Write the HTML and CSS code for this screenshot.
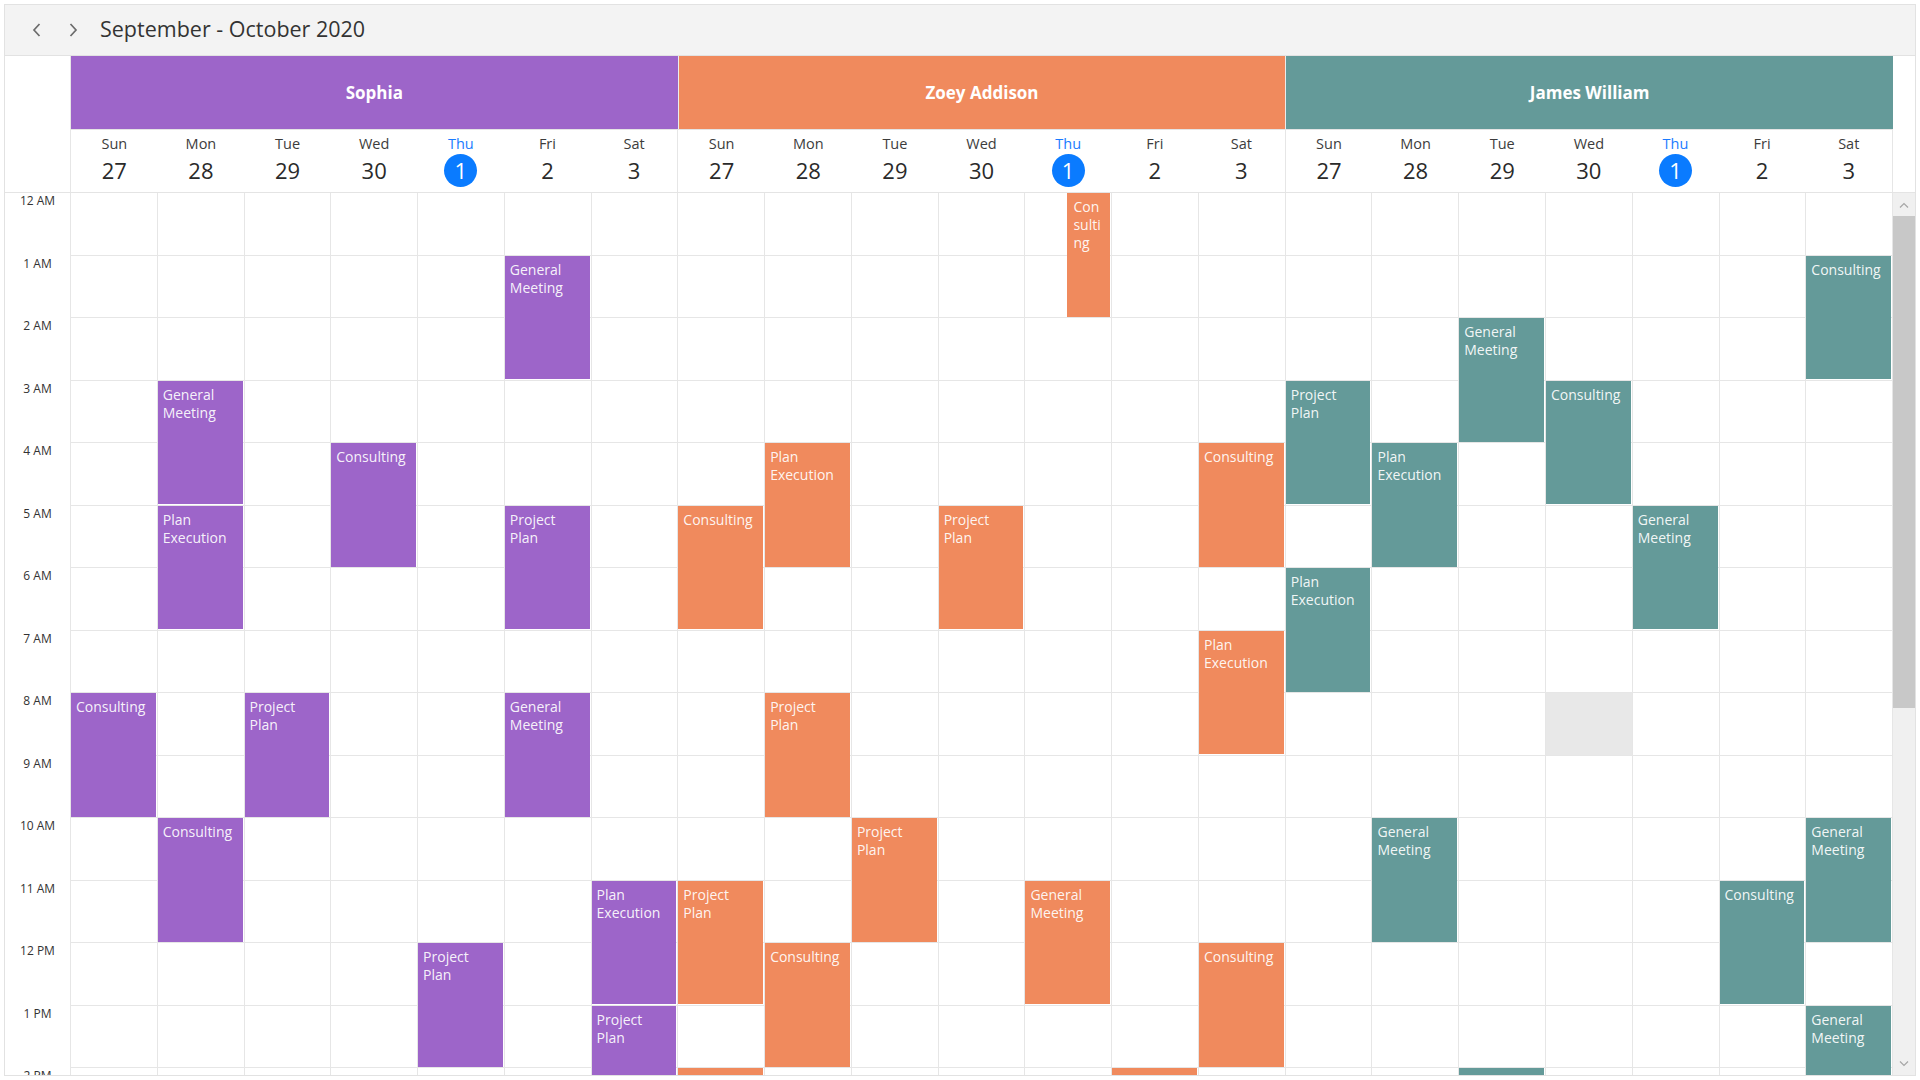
FILE: index.html
```html
<!DOCTYPE html>
<html lang="en">
<head>
<meta charset="utf-8">
<title>Scheduler</title>
<link rel="stylesheet" href="styles.css">
</head>
<body>
<div class="scheduler">
  <div class="toolbar">
    <button class="nav" aria-label="Previous">
      <svg width="12" height="16" viewBox="0 0 12 16"><path d="M8.5 2 L3 8 L8.5 14" fill="none" stroke="#6b6b6b" stroke-width="1.7"/></svg>
    </button>
    <button class="nav" aria-label="Next">
      <svg width="12" height="16" viewBox="0 0 12 16"><path d="M3.5 2 L9 8 L3.5 14" fill="none" stroke="#6b6b6b" stroke-width="1.7"/></svg>
    </button>
    <span class="title">September - October 2020</span>
  </div>

  <div class="head">
    <div class="corner"></div>
    <div class="hmain">
      <div class="res-row">
        <div class="res sophia">Sophia</div>
        <div class="res zoey">Zoey Addison</div>
        <div class="res james">James William</div>
      </div>
      <div class="day-row">
        <div class="group">
          <div class="day"><span class="dn">Sun</span><span class="dd">27</span></div>
          <div class="day"><span class="dn">Mon</span><span class="dd">28</span></div>
          <div class="day"><span class="dn">Tue</span><span class="dd">29</span></div>
          <div class="day"><span class="dn">Wed</span><span class="dd">30</span></div>
          <div class="day today"><span class="dn">Thu</span><span class="dd"><span class="circle">1</span></span></div>
          <div class="day"><span class="dn">Fri</span><span class="dd">2</span></div>
          <div class="day"><span class="dn">Sat</span><span class="dd">3</span></div>
        </div>
        <div class="group">
          <div class="day"><span class="dn">Sun</span><span class="dd">27</span></div>
          <div class="day"><span class="dn">Mon</span><span class="dd">28</span></div>
          <div class="day"><span class="dn">Tue</span><span class="dd">29</span></div>
          <div class="day"><span class="dn">Wed</span><span class="dd">30</span></div>
          <div class="day today"><span class="dn">Thu</span><span class="dd"><span class="circle">1</span></span></div>
          <div class="day"><span class="dn">Fri</span><span class="dd">2</span></div>
          <div class="day"><span class="dn">Sat</span><span class="dd">3</span></div>
        </div>
        <div class="group">
          <div class="day"><span class="dn">Sun</span><span class="dd">27</span></div>
          <div class="day"><span class="dn">Mon</span><span class="dd">28</span></div>
          <div class="day"><span class="dn">Tue</span><span class="dd">29</span></div>
          <div class="day"><span class="dn">Wed</span><span class="dd">30</span></div>
          <div class="day today"><span class="dn">Thu</span><span class="dd"><span class="circle">1</span></span></div>
          <div class="day"><span class="dn">Fri</span><span class="dd">2</span></div>
          <div class="day"><span class="dn">Sat</span><span class="dd">3</span></div>
        </div>
      </div>
    </div>
    <div class="hspacer"></div>
  </div>

  <div class="body">
    <div class="times">
      <div class="t">12 AM</div>
      <div class="t">1 AM</div>
      <div class="t">2 AM</div>
      <div class="t">3 AM</div>
      <div class="t">4 AM</div>
      <div class="t">5 AM</div>
      <div class="t">6 AM</div>
      <div class="t">7 AM</div>
      <div class="t">8 AM</div>
      <div class="t">9 AM</div>
      <div class="t">10 AM</div>
      <div class="t">11 AM</div>
      <div class="t">12 PM</div>
      <div class="t">1 PM</div>
      <div class="t">2 PM</div>
    </div>

    <div class="days">
      <div class="rows">
        <div class="row"></div><div class="row"></div><div class="row"></div><div class="row"></div><div class="row"></div>
        <div class="row"></div><div class="row"></div><div class="row"></div><div class="row"></div><div class="row"></div>
        <div class="row"></div><div class="row"></div><div class="row"></div><div class="row"></div><div class="row"></div>
      </div>
      <div class="cols">
        <!-- Sophia -->
        <div class="dcol">
          <div class="ev p" style="--s:8;--n:2">Consulting</div>
        </div>
        <div class="dcol">
          <div class="ev p" style="--s:3;--n:2">General Meeting</div>
          <div class="ev p" style="--s:5;--n:2">Plan Execution</div>
          <div class="ev p" style="--s:10;--n:2">Consulting</div>
        </div>
        <div class="dcol">
          <div class="ev p" style="--s:8;--n:2">Project Plan</div>
        </div>
        <div class="dcol">
          <div class="ev p" style="--s:4;--n:2">Consulting</div>
        </div>
        <div class="dcol">
          <div class="ev p" style="--s:12;--n:2">Project Plan</div>
        </div>
        <div class="dcol">
          <div class="ev p" style="--s:1;--n:2">General Meeting</div>
          <div class="ev p" style="--s:5;--n:2">Project Plan</div>
          <div class="ev p" style="--s:8;--n:2">General Meeting</div>
        </div>
        <div class="dcol">
          <div class="ev p" style="--s:11;--n:2">Plan Execution</div>
          <div class="ev p" style="--s:13;--n:2">Project Plan</div>
        </div>
        <!-- Zoey Addison -->
        <div class="dcol">
          <div class="ev o" style="--s:5;--n:2">Consulting</div>
          <div class="ev o" style="--s:11;--n:2">Project Plan</div>
          <div class="ev o" style="--s:14;--n:2">Consulting</div>
        </div>
        <div class="dcol">
          <div class="ev o" style="--s:4;--n:2">Plan Execution</div>
          <div class="ev o" style="--s:8;--n:2">Project Plan</div>
          <div class="ev o" style="--s:12;--n:2">Consulting</div>
        </div>
        <div class="dcol">
          <div class="ev o" style="--s:10;--n:2">Project Plan</div>
        </div>
        <div class="dcol">
          <div class="ev o" style="--s:5;--n:2">Project Plan</div>
        </div>
        <div class="dcol">
          <div class="ev o half" style="--s:0;--n:2">Consulting</div>
          <div class="ev o" style="--s:11;--n:2">General Meeting</div>
        </div>
        <div class="dcol">
          <div class="ev o" style="--s:14;--n:2">General Meeting</div>
        </div>
        <div class="dcol">
          <div class="ev o" style="--s:4;--n:2">Consulting</div>
          <div class="ev o" style="--s:7;--n:2">Plan Execution</div>
          <div class="ev o" style="--s:12;--n:2">Consulting</div>
        </div>
        <!-- James William -->
        <div class="dcol">
          <div class="ev g" style="--s:3;--n:2">Project Plan</div>
          <div class="ev g" style="--s:6;--n:2">Plan Execution</div>
        </div>
        <div class="dcol">
          <div class="ev g" style="--s:4;--n:2">Plan Execution</div>
          <div class="ev g" style="--s:10;--n:2">General Meeting</div>
        </div>
        <div class="dcol">
          <div class="ev g" style="--s:2;--n:2">General Meeting</div>
          <div class="ev g" style="--s:14;--n:2">Project Plan</div>
        </div>
        <div class="dcol">
          <div class="ev g" style="--s:3;--n:2">Consulting</div>
          <div class="hover-cell" style="--s:8"></div>
        </div>
        <div class="dcol">
          <div class="ev g" style="--s:5;--n:2">General Meeting</div>
        </div>
        <div class="dcol">
          <div class="ev g" style="--s:11;--n:2">Consulting</div>
        </div>
        <div class="dcol">
          <div class="ev g" style="--s:1;--n:2">Consulting</div>
          <div class="ev g" style="--s:10;--n:2">General Meeting</div>
          <div class="ev g" style="--s:13;--n:2">General Meeting</div>
        </div>
      </div>
    </div>

    <div class="vscroll">
      <div class="sb-btn">
        <svg width="10" height="6" viewBox="0 0 10 6"><path d="M1 5.5 L5 1.5 L9 5.5" fill="none" stroke="#a6a6a6" stroke-width="1.2"/></svg>
      </div>
      <div class="sb-thumb"></div>
      <div class="sb-fill"></div>
      <div class="sb-btn">
        <svg width="10" height="6" viewBox="0 0 10 6"><path d="M1 0.5 L5 4.5 L9 0.5" fill="none" stroke="#a6a6a6" stroke-width="1.2"/></svg>
      </div>
    </div>
  </div>
</div>
</body>
</html>
```

FILE: styles.css
```css
* {
  box-sizing: border-box;
}

html, body {
  margin: 0;
  padding: 0;
  background: #ffffff;
}

body {
  font-family: "Open Sans", "Noto Sans", "Liberation Sans", sans-serif;
  color: #333333;
}

.scheduler {
  margin: 4px;
  height: 1072px;
  border: 1px solid #e2e2e2;
  display: flex;
  flex-direction: column;
  overflow: hidden;
}

/* ---------- toolbar ---------- */
.toolbar {
  height: 51px;
  flex: none;
  background: #f3f3f3;
  border-bottom: 1px solid #e2e2e2;
  display: flex;
  align-items: center;
  padding-left: 14px;
}

.nav {
  width: 36px;
  height: 30px;
  border: 0;
  background: transparent;
  padding: 0;
  display: flex;
  align-items: center;
  justify-content: center;
}

.title {
  margin-left: 9px;
  font-size: 21.5px;
  color: #333333;
  line-height: 28px;
  margin-top: -3px;
}

/* ---------- header ---------- */
.head {
  flex: none;
  display: flex;
  border-bottom: 1px solid #e4e4e4;
}

.corner {
  width: 66px;
  flex: none;
  border-right: 1px solid #e6e6e6;
}

.hmain {
  flex: 1;
  min-width: 0;
}

.hspacer {
  width: 22px;
  flex: none;
}

.res-row {
  display: flex;
  height: 74px;
  border-bottom: 1px solid #e4e4e4;
}

.res {
  flex: 1;
  display: flex;
  align-items: center;
  justify-content: center;
  color: #ffffff;
  font-weight: 700;
  font-size: 17px;
  border-right: 1px solid #ececec;
}

.res:last-child {
  border-right: 0;
}

.sophia { background: #9d65c9; }
.zoey { background: #f08a5d; }
.james { background: #649a99; }

.day-row {
  display: flex;
  height: 62px;
}

.group {
  flex: 1;
  display: flex;
  border-right: 1px solid #e6e6e6;
}

.day {
  flex: 1;
  display: flex;
  flex-direction: column;
  align-items: center;
  padding-top: 4px;
}

.dn {
  font-size: 14.5px;
  line-height: 20px;
  color: #3c3c3c;
}

.dd {
  font-size: 22px;
  line-height: 33px;
  height: 33px;
  color: #2a2a2a;
}

.today .dn {
  color: #1a7bff;
}

.circle {
  display: inline-flex;
  align-items: center;
  justify-content: center;
  width: 33px;
  height: 33px;
  border-radius: 50%;
  background: #0a7bff;
  color: #ffffff;
  font-size: 22px;
}

/* ---------- body ---------- */
.body {
  flex: 1;
  display: flex;
  min-height: 0;
  overflow: hidden;
}

.times {
  width: 66px;
  flex: none;
  border-right: 1px solid #e6e6e6;
}

.t {
  height: 62.5px;
  font-size: 12px;
  line-height: 16px;
  text-align: center;
  color: #333333;
}

.days {
  flex: 1;
  min-width: 0;
  position: relative;
  overflow: hidden;
}

.row {
  height: 62.5px;
  border-bottom: 1px solid #e6e6e6;
}

.cols {
  position: absolute;
  inset: 0;
  display: flex;
}

.dcol {
  flex: 1;
  position: relative;
  border-right: 1px solid #e6e6e6;
}

.ev {
  position: absolute;
  left: 0;
  right: 1px;
  top: calc(var(--s) * 62.5px);
  height: calc(var(--n) * 62.5px - 1.5px);
  padding: 5px 5px;
  font-size: 14px;
  line-height: 18px;
  color: rgba(255, 255, 255, 0.93);
  overflow: hidden;
}

.ev.half {
  left: 49%;
  word-break: break-all;
  padding-left: 6px;
  padding-right: 7px;
}

.p { background: #9d65c9; }
.o { background: #f08a5d; }
.g { background: #649a99; }

.hover-cell {
  position: absolute;
  left: 0;
  right: 0;
  top: calc(var(--s) * 62.5px);
  height: 61.5px;
  background: #e8e8e8;
}

/* ---------- scrollbar ---------- */
.vscroll {
  width: 22px;
  flex: none;
  background: #f0f0f0;
  display: flex;
  flex-direction: column;
}

.sb-btn {
  height: 23px;
  flex: none;
  display: flex;
  align-items: center;
  justify-content: center;
}

.sb-thumb {
  height: 492px;
  flex: none;
  background: #c8c8c8;
}

.sb-fill {
  flex: 1;
}
```
